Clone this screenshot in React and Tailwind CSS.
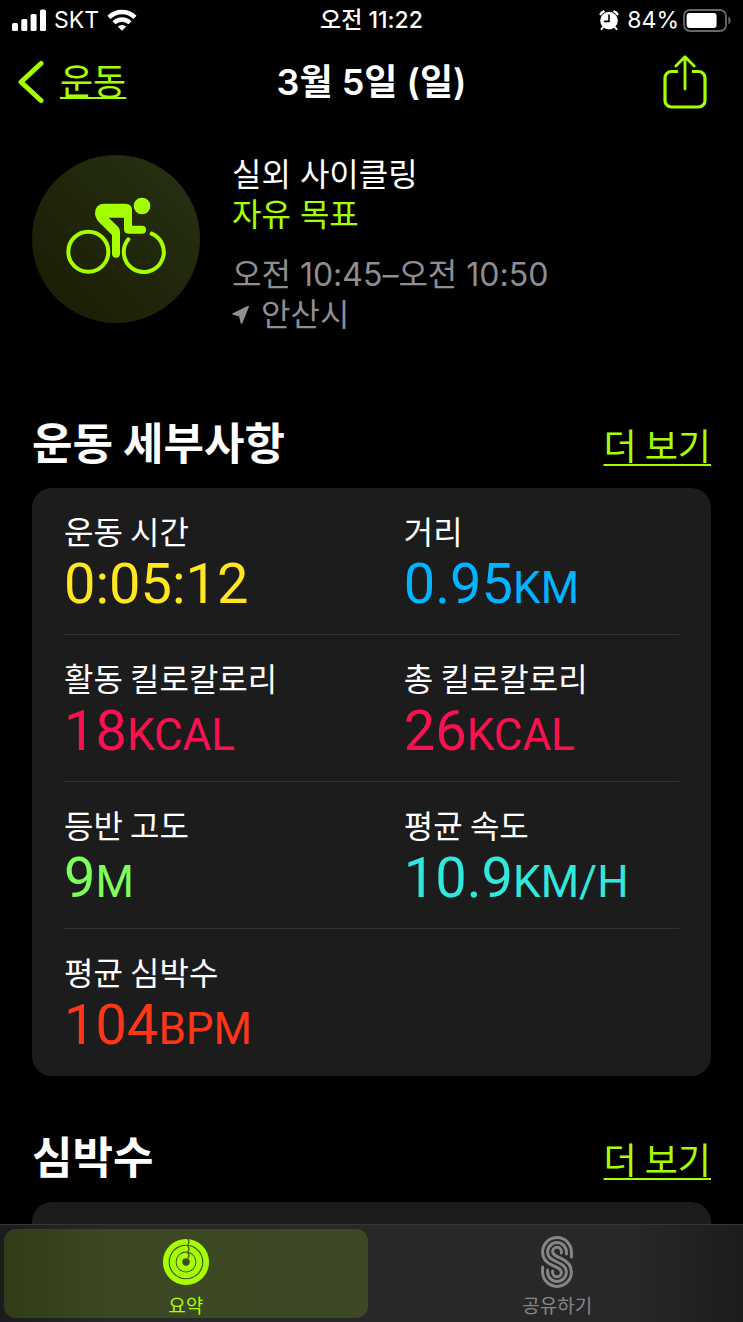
import React from 'react';

const metrics = [
  { label: '운동 시간', value: '0:05:12', unit: '', color: 'text-[#ffe620]' },
  { label: '거리', value: '0.95', unit: 'KM', color: 'text-[#00b4ff]' },
  { label: '활동 킬로칼로리', value: '18', unit: 'KCAL', color: 'text-[#fa114f]' },
  { label: '총 킬로칼로리', value: '26', unit: 'KCAL', color: 'text-[#fa114f]' },
  { label: '등반 고도', value: '9', unit: 'M', color: 'text-[#7dff59]' },
  { label: '평균 속도', value: '10.9', unit: 'KM/H', color: 'text-[#32e8dc]' },
  { label: '평균 심박수', value: '104', unit: 'BPM', color: 'text-[#ff3517]' },
];

const rows = [0, 2, 4, 6].map((start) => metrics.slice(start, start + 2));

const SignalIcon = () => (
  <svg width="34" height="22" viewBox="0 0 34 22" fill="currentColor" aria-hidden="true">
    <rect x="0" y="14" width="6" height="8" rx="1.6" />
    <rect x="9.3" y="10" width="6" height="12" rx="1.6" />
    <rect x="18.6" y="5" width="6" height="17" rx="1.6" />
    <rect x="28" y="0.5" width="6" height="21.5" rx="1.6" />
  </svg>
);

const WifiIcon = () => (
  <svg width="30" height="22" viewBox="0 0 30 22" aria-hidden="true">
    <g fill="none" stroke="currentColor" strokeWidth="4.4">
      <path d="M2 8.4A18.5 18.5 0 0 1 28 8.4" />
      <path d="M7 13.8A11.4 11.4 0 0 1 23 13.8" />
    </g>
    <path d="M15 21.8L10.8 17.6A6.2 6.2 0 0 1 19.2 17.6z" fill="currentColor" />
  </svg>
);

const AlarmIcon = () => (
  <svg width="20" height="21" viewBox="0 0 20 21" aria-hidden="true">
    <circle cx="10" cy="10.6" r="8.8" fill="currentColor" />
    <g fill="none" stroke="currentColor" strokeWidth="2.4" strokeLinecap="round">
      <path d="M1.6 4.2Q2.4 2.2 4.6 1.6M18.4 4.2Q17.6 2.2 15.4 1.6" />
      <path d="M4 17.4L2.4 19.2M16 17.4L17.6 19.2" strokeWidth="1.8" />
    </g>
    <path d="M10 5V11.4H5.6" fill="none" stroke="#000" strokeWidth="1.6" strokeLinecap="round" />
  </svg>
);

const BatteryIcon = () => (
  <svg width="48" height="23" viewBox="0 0 48 23" aria-hidden="true">
    <rect x="1" y="1" width="42" height="21" rx="6" fill="none" stroke="#68686a" strokeWidth="1.8" />
    <rect x="3.6" y="4" width="30" height="15" rx="3" fill="currentColor" />
    <path d="M45.4 7.6C48.4 8.8 48.4 14.2 45.4 15.4z" fill="#68686a" />
  </svg>
);

const ShareIcon = () => (
  <svg
    width="44" height="54" viewBox="0 0 44 54" fill="none" stroke="currentColor"
    strokeWidth="3.2" strokeLinejoin="round" aria-hidden="true"
  >
    <path d="M15 16.5H8.5A6.5 6.5 0 0 0 2 23V45.5A6.5 6.5 0 0 0 8.5 52H35.5A6.5 6.5 0 0 0 42 45.5V23A6.5 6.5 0 0 0 35.5 16.5H29" />
    <path d="M22 34V2.3M12.8 11L22 1.8L31.2 11" strokeLinecap="round" strokeWidth="2.8" />
  </svg>
);

const CyclistIcon = () => (
  <svg className="size-full" viewBox="36 28 504 504" aria-hidden="true">
    <g fill="none" stroke="currentColor" strokeWidth="12" strokeLinecap="round">
      <circle cx="205" cy="318" r="60" />
      <path d="M325 281A60 60 0 1 0 395 264" />
    </g>
    <g fill="currentColor">
      <circle cx="366" cy="181" r="25" />
      <path d="M254 174H316Q336 174 336 194V240H366A12 12 0 0 1 366 264H326Q312 264 312 250V216H266L294 243Q300 249 300 258V324A12 12 0 0 1 276 324V268L236 228Q225 216 225 203Q225 174 254 174z" />
    </g>
  </svg>
);

const LocationIcon = () => (
  <svg width="17" height="18" viewBox="0 0 48 52" fill="currentColor" aria-hidden="true">
    <path
      d="M46 2L3 23L22 28L27 49z"
      stroke="currentColor" strokeWidth="5" strokeLinejoin="round"
    />
  </svg>
);

const RingsIcon = () => (
  <svg width="48" height="48" viewBox="0 0 48 48" fill="none" aria-hidden="true">
    <g stroke="currentColor" strokeWidth="5.8">
      <circle cx="24" cy="24" r="20.2" />
      <circle cx="24" cy="24" r="13.3" />
      <circle cx="24" cy="24" r="6.6" />
    </g>
    <g stroke="#3c4723" strokeWidth="1.2">
      <path d="M25.6 0.8Q28.4 3.8 25.6 6.8" />
      <path d="M25.6 7.8Q28.4 10.8 25.6 13.8" />
      <path d="M25.6 14.6Q28.4 17.4 25.6 20.4" />
    </g>
  </svg>
);

const SharingIcon = () => (
  <svg
    width="32" height="52" viewBox="0 0 32 52" fill="none" stroke="currentColor"
    strokeWidth="3" strokeLinecap="round" aria-hidden="true"
  >
    <path d="M30.4 21V16A14.4 14.4 0 0 0 1.6 16C1.6 22.5 5 26.4 11 29.2C17 32 20.4 33 20.4 36.5A4.4 4.4 0 0 1 11.6 36V35" />
    <path d="M25.4 18V16A9.4 9.4 0 0 0 6.6 16C6.6 21 10 23.3 16 26C22 28.7 25.4 31 25.4 36A9.4 9.4 0 0 1 6.6 36V34" />
    <path d="M20.4 17V16A4.4 4.4 0 0 0 11.6 15.5C11.6 19 15 20 21 22.8C27 25.6 30.4 29.5 30.4 36A14.4 14.4 0 0 1 1.6 36V31" />
  </svg>
);

const StatusBar = () => (
  <div className="grid h-10 shrink-0 grid-cols-[1fr_auto_1fr] items-center px-3 text-[23px] leading-8">
    <div className="flex items-center gap-2">
      <SignalIcon />
      <span>SKT</span>
      <WifiIcon />
    </div>
    <span className="font-medium">오전 11:22</span>
    <div className="flex items-center justify-end gap-2">
      <AlarmIcon />
      <div className="flex items-center gap-1">
        <span>84%</span>
        <BatteryIcon />
      </div>
    </div>
  </div>
);

const Header = () => (
  <header className="grid h-[84px] shrink-0 grid-cols-[1fr_auto_1fr] items-center px-4">
    <a href="#workouts" className="flex items-center gap-4 text-[#a6ff00]">
      <svg
        width="28" height="44" viewBox="0 0 28 44" fill="none" stroke="currentColor"
        strokeWidth="5" strokeLinecap="round" strokeLinejoin="round" aria-hidden="true"
      >
        <path d="M25 3.5L5 22L25 40.5" />
      </svg>
      <span className="text-[36px] leading-10 underline decoration-2 underline-offset-2">운동</span>
    </a>
    <h1 className="text-[36px] font-semibold leading-10">3월 5일 (일)</h1>
    <button type="button" aria-label="공유" className="mr-5 justify-self-end text-[#a6ff00]">
      <ShareIcon />
    </button>
  </header>
);

const SectionHeader = ({ title, href }) => (
  <div className="mb-[19px] flex items-baseline justify-between font-['Noto_Sans_CJK_KR',sans-serif]">
    <h2 className="text-[44px] font-bold leading-14">{title}</h2>
    <a href={href} className="text-[36px] leading-10 text-[#a6ff00] underline decoration-2 underline-offset-4">
      더 보기
    </a>
  </div>
);

const Metric = ({ label, value, unit, color }) => (
  <div>
    <dt className="mb-0.5 font-['Noto_Sans_CJK_KR',sans-serif] text-[32px] leading-10">{label}</dt>
    <dd className={`font-[Roboto,sans-serif] text-[56px] leading-16 ${color}`}>
      {value}
      {unit && <span className="text-[44px] leading-none">{unit}</span>}
    </dd>
  </div>
);

const App = () => {
  return (
    <div className="flex h-screen flex-col bg-black font-[Inter,'Noto_Sans_CJK_KR',sans-serif] text-white">
      <StatusBar />
      <Header />

      <main className="min-h-0 flex-1 overflow-y-auto px-8 [scrollbar-width:none]">
        <section className="flex gap-8 pt-[31px]">
          <div className="size-42 shrink-0 rounded-full bg-linear-to-tr from-[#1a1b04] to-[#263214] text-[#a6ff00]">
            <CyclistIcon />
          </div>
          <div className="text-[32px] leading-10">
            <p>실외 사이클링</p>
            <p className="text-[#a6ff00]">자유 목표</p>
            <p className="mt-5 text-[#8e8e93]">오전 10:45–오전 10:50</p>
            <p className="flex items-center gap-3 text-[#8e8e93]">
              <LocationIcon />
              안산시
            </p>
          </div>
        </section>

        <section className="mt-[78px]">
          <SectionHeader title="운동 세부사항" href="#details" />
          <dl className="rounded-[20px] bg-[#1c1c1c] px-8">
            {rows.map((row, i) => (
              <div
                key={i}
                className="grid grid-cols-[21fr_17fr] border-b border-[#343434] pb-[18px] pt-[22px] last:border-transparent"
              >
                {row.map((metric) => (
                  <Metric key={metric.label} {...metric} />
                ))}
              </div>
            ))}
          </dl>
        </section>

        <section className="mt-[51px]">
          <SectionHeader title="심박수" href="#heart-rate" />
          <div className="h-60 rounded-[20px] bg-[#1c1c1c]" />
        </section>
      </main>

      <nav className="grid shrink-0 grid-cols-2 border-t border-[#363636] bg-[linear-gradient(to_right,#1c1c1e,#282828_15%,#282828_85%,#1c1c1c)] text-[19px] leading-[22px]">
        <a
          href="#summary"
          aria-current="page"
          className="m-1 flex flex-col items-center gap-2.5 rounded-xl bg-linear-to-r from-[#313d18] via-[#3c4723] via-30% to-[#3d4826] pt-[9px] text-[#a6ff00]"
        >
          <RingsIcon />
          <span>요약</span>
        </a>
        <a href="#sharing" className="m-1 flex flex-col items-center gap-2 pt-[7px] text-[#868686]">
          <SharingIcon />
          <span>공유하기</span>
        </a>
      </nav>
    </div>
  );
};

export default App;
